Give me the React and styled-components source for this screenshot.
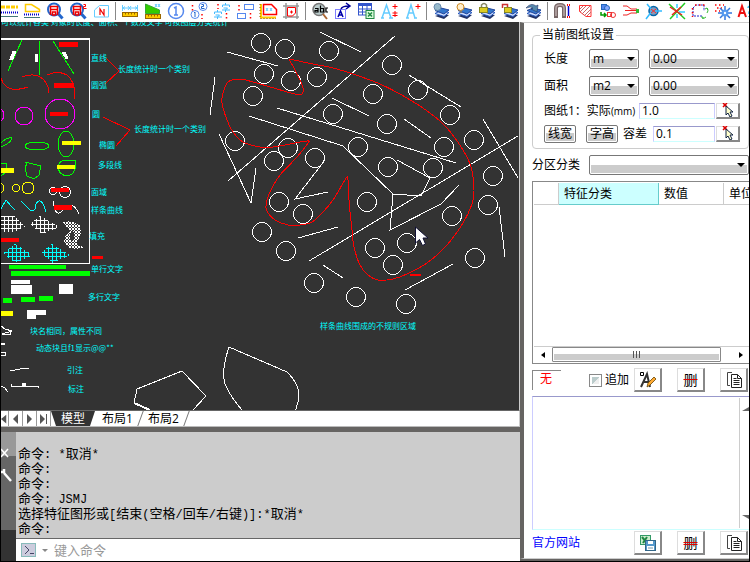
import React from "react"
import styled, { createGlobalStyle } from "styled-components"

const GlobalStyle = createGlobalStyle`
  * {
    box-sizing: border-box;
  }
  body {
    margin: 0;
    background: #000;
    color: #000;
    font-family: "Open Sans", "Noto Sans CJK SC", sans-serif;
    font-size: 12px;
    line-height: 16px;
  }
  button, input, select, textarea {
    font: inherit;
    color: inherit;
    margin: 0;
    padding: 0;
    border-radius: 0;
  }
`

const Window = styled.div`
  display: flex;
  flex-direction: column;
  height: 100vh;
  min-height: 540px;
  border: 1px solid #000;
  background: #666462;
`

/* toolbar */

const Toolbar = styled.header`
  flex: none;
  height: 21px;
  background: #fff;
  overflow: hidden;
`

const ToolRow = styled.div`
  display: flex;
  margin-left: -4px;
`

const ToolButton = styled.button`
  flex: none;
  display: flex;
  justify-content: center;
  width: 23px;
  height: 21px;
  border: 0;
  background: none;
`

const ToolSeparator = styled.span`
  flex: none;
  width: 6px;
  height: 18px;
  margin-top: 1px;
  border-left: 3px solid #fff;
  background: linear-gradient(90deg, #888 1px, #fff 1px);
`

/* main split */

const Body = styled.div`
  display: flex;
  flex: 1;
  min-height: 0;
`

const Workspace = styled.main`
  display: flex;
  flex-direction: column;
  flex: 1;
  min-width: 0;
`

const Drawing = styled.svg`
  display: block;
  flex: 1;
  width: 100%;
  min-height: 0;
  background: #333;
  border-right: 1px solid #ccc;
  shape-rendering: crispEdges;
  fill: none;
  stroke: #fff;
  font-family: "Noto Sans CJK SC", sans-serif;
  font-size: 8px;

  text {
    fill: #0ff;
    stroke: none;
  }
`

const TabBar = styled.nav`
  display: flex;
  flex: none;
  height: 17px;
  background: #fff;
  border-top: 1px solid #666;
  border-bottom: 1px solid #bbb;
  border-right: 1px solid #ccc;
  overflow: hidden;
`

const PageButton = styled.button`
  display: flex;
  align-items: center;
  justify-content: center;
  width: ${({ $first }) => ($first ? "8px" : "14px")};
  border: 0;
  border-right: 1px solid #999;
  background: #fff;
`

const Tab = styled.button`
  width: ${({ $active }) => ($active ? "44px" : "45px")};
  border: 0;
  line-height: 15px;
  white-space: nowrap;
  background: ${({ $active }) => ($active ? "#333" : "#fff")};
  color: ${({ $active }) => ($active ? "#fff" : "#000")};
  clip-path: ${({ $active }) =>
    $active ? "polygon(0 0, 100% 0, calc(100% - 5px) 100%, 5px 100%)" : "none"};
`

const Slash = styled.span`
  width: 1px;
  background: #777;
  transform: skewX(-20deg);
`

/* command line */

const Command = styled.section`
  display: flex;
  flex: none;
  height: 134px;
  border-top: 5px solid #666462;
`

const CommandSide = styled.div`
  display: flex;
  flex-direction: column;
  width: 15px;
  background: linear-gradient(#999 24px, #666 24px, #666 98px, #333 98px);
`

const SideButton = styled.button`
  display: flex;
  height: 16px;
  margin-top: ${({ $gap }) => $gap}px;
  border: 0;
  background: none;
`

const CommandMain = styled.div`
  display: flex;
  flex-direction: column;
  flex: 1;
  min-width: 0;
`

const Log = styled.div`
  display: flex;
  flex-direction: column;
  justify-content: flex-end;
  flex: 1;
  padding: 0 2px 3px;
  background: #ccc;
  font-size: 13px;
  line-height: 15px;
`

const LogLine = styled.div`
  height: 15px;
  white-space: pre;
  font-family: "Noto Sans CJK SC", sans-serif;
`

const Mono = styled.span`
  font-family: "Liberation Mono", monospace;
  font-size: 12px;
`

const Prompt = styled.div`
  display: flex;
  align-items: center;
  height: 23px;
  padding-left: 5px;
  gap: 4px;
  background: #fff;
  border-top: 1px solid #666;
`

const PromptButton = styled.button`
  display: flex;
  width: ${({ $wide }) => ($wide ? "15px" : "10px")};
  height: 14px;
  align-items: center;
  justify-content: center;
  background: ${({ $wide }) => ($wide ? "#ccd" : "none")};
  border: ${({ $wide }) => ($wide ? "1px solid #8bb" : "0")};
`

const PromptInput = styled.input`
  flex: 1;
  min-width: 0;
  border: 0;
  outline: 0;
  background: none;
  font-size: 13px;

  &::placeholder {
    color: #999;
    opacity: 1;
  }
`

/* dock */

const Dock = styled.aside`
  display: flex;
  flex-direction: column;
  flex: none;
  width: 229px;
  margin-bottom: 2px;
  padding: 4px 0 2px 8px;
  background: #fff;
  border: 1px solid #ccc;
  border-left: 4px solid #666462;
  border-right: 0;
`

const Group = styled.fieldset`
  display: flex;
  flex-direction: column;
  min-width: 0;
  margin: 0;
  padding: 2px 8px 3px 11px;
  border: 1px solid #ccc;
  border-radius: 4px;

  legend {
    padding: 0 2px;
    margin-left: -4px;
    line-height: 16px;
  }
`

const FieldRow = styled.div`
  display: flex;
  align-items: center;
  height: ${({ $small }) => ($small ? "23px" : "27px")};
  white-space: nowrap;
`

const Label = styled.label`
  width: ${({ $width }) => $width}px;
  flex: none;
`

const Unit = styled.span`
  font-size: 10px;
`

const SelectBox = styled.div`
  display: grid;
  width: ${({ $width }) => ($width ? `${$width}px` : "auto")};
  flex: ${({ $width }) => ($width ? "none" : "1")};
  margin-right: ${({ $gap }) => $gap || 0}px;
  align-items: center;

  select, svg {
    grid-area: 1 / 1;
  }
  svg {
    justify-self: end;
    margin-right: 4px;
    pointer-events: none;
  }
`

const Select = styled.select`
  appearance: none;
  width: 100%;
  height: 20px;
  padding-left: 3px;
  border: 1px solid #777;
  border-radius: 2px;
  background: linear-gradient(#fff 50%, #ccc 50%);
  box-shadow: inset 0 0 0 1px #fff;
  line-height: 16px;
`

const TextInput = styled.input`
  flex: 1;
  min-width: 0;
  height: 16px;
  padding-left: 2px;
  border: 1px solid #ccf;
  border-top-color: #99c;
  border-bottom-color: #cff;
  background: #fff;
`

const SmallButton = styled.button`
  width: 32px;
  height: 18px;
  margin-right: ${({ $gap }) => $gap}px;
  border: 1px solid #777;
  border-radius: 2px;
  background: linear-gradient(#fff 45%, #ccc 45%);
  box-shadow: inset 0 0 0 1px #fff;
  line-height: 15px;
`

const RaisedButton = styled.button`
  display: flex;
  flex: none;
  align-items: center;
  justify-content: center;
  width: ${({ $small }) => ($small ? "24px" : "28px")};
  height: ${({ $small }) => ($small ? "16px" : "24px")};
  margin-left: ${({ $gap }) => $gap}px;
  border: 1px solid #ddd;
  border-right: 2px solid #888;
  border-bottom: 2px solid #888;
  background: #fff;
`

const Struck = styled.span`
  font-size: 14px;
  text-decoration: line-through ${({ $double }) => ($double ? "double" : "solid")} #d00;
`

const CategoryRow = styled.div`
  display: flex;
  align-items: center;
  height: 32px;
`

const TablePanel = styled.div`
  display: flex;
  flex-direction: column;
  flex: 1;
  min-height: 60px;
  padding: 1px 0 1px 1px;
  border: 1px solid #888;
  border-right: 0;
  overflow: hidden;
`

const Table = styled.table`
  table-layout: fixed;
  width: 100%;
  border-collapse: separate;
  border-spacing: 0;
`

const Head = styled.th`
  width: ${({ $width }) => ($width ? `${$width}px` : "auto")};
  height: 22px;
  padding: 0 0 0 5px;
  text-align: left;
  font-weight: 400;
  white-space: nowrap;
  overflow: hidden;
  border-right: 1px solid ${({ $active }) => ($active ? "#6cc" : "#ccc")};
  border-bottom: 1px solid ${({ $active }) => ($active ? "#6cc" : "#ccc")};
  background: ${({ $active }) => ($active ? "#cff" : "#fff")};

  &:last-child {
    border-right: 0;
  }
`

const ScrollBar = styled.div`
  display: flex;
  align-items: center;
  height: 16px;
  margin-top: auto;
  border-top: 1px solid #ccc;
`

const ScrollArrow = styled.button`
  display: flex;
  align-items: center;
  justify-content: center;
  flex: ${({ $grow }) => ($grow ? "1" : "none")};
  width: 18px;
  height: 14px;
  border: 0;
  padding-left: ${({ $grow }) => ($grow ? "12px" : "0")};
  background: none;
`

const Thumb = styled.div`
  display: flex;
  align-items: center;
  justify-content: center;
  width: 169px;
  height: 15px;
  border: 1px solid #888;
  border-radius: 1px;
  background: linear-gradient(#fff 45%, #ccc 45%);
  box-shadow: inset 0 0 0 1px #fff;
`

const ActionRow = styled.div`
  display: flex;
  align-items: center;
  height: ${({ $last }) => ($last ? "26px" : "32px")};
`

const Status = styled.span`
  width: 29px;
  height: 20px;
  margin-right: 28px;
  padding-left: 7px;
  border-top: 1px solid #888;
  border-left: 1px solid #888;
  color: #f00;
`

const CheckLabel = styled.label`
  display: flex;
  align-items: center;
  gap: 3px;
  width: 45px;
  white-space: nowrap;
`

const Check = styled.input`
  appearance: none;
  width: 13px;
  height: 13px;
  border: 1px solid #888;
  background: linear-gradient(135deg, #bcc 50%, #eee 50%);
  box-shadow: inset 0 0 0 2px #fff;
`

const NoteBox = styled.div`
  display: flex;
  height: 134px;
  border-top: 1px solid #99c;
  border-left: 1px solid #ccf;
  border-bottom: 1px solid #cff;
`

const Notes = styled.textarea`
  flex: 1;
  min-width: 0;
  border: 0;
  outline: 0;
  resize: none;
  background: none;
`

const NoteScroll = styled.div`
  display: flex;
  flex-direction: column;
  justify-content: space-between;
  align-items: flex-end;
  width: 10px;
  margin: 1px 0;
  padding: 7px 0;
  border-left: 1px solid #ccc;
`

const SiteLink = styled.a`
  width: 102px;
  color: #00f;
  text-decoration: none;
`

/* toolbar icons, 20 x 20 */

const Ruler = ({ y }) => (
  <g>
    <rect x="2.5" y={y} width="15" height="4" fill="#fc0" stroke="#960" />
    <path d={`M5.5 ${y}v2M8.5 ${y}v2M11.5 ${y}v2M14.5 ${y}v2`} stroke="#960" />
  </g>
)

const Lens = () => (
  <g>
    <circle cx="9" cy="8.5" r="6" fill="#fff" stroke="#26c" strokeWidth="2" />
    <path d="M13.5 13l4 4.5" stroke="#26c" strokeWidth="3" />
    <path d="M5.5 14V5.5h7V14M5.5 8.5h7M7.5 11h3v3h-3z" stroke="#e00" strokeWidth="1.5" />
  </g>
)

const Layers = () => (
  <g>
    <path d="M4 15l6-2 8 1-5 4z" fill="#236" />
    <path d="M4 12.5l6-3 8 2-5 4z" fill="#cdf" stroke="#25b" />
    <path d="M4 9.5l6-2.500 8 2-5 4z" fill="#37c" stroke="#249" />
  </g>
)

const RedDots = ({ d }) => <path d={d} stroke="#f00" strokeWidth="1.5" strokeDasharray="1.5 2.5" />

const tools = [
  {
    name: "线段",
    icon: (
      <>
        <path d="M2 6h17" stroke="#fc0" strokeWidth="3" strokeDasharray="4 1" />
        <path d="M2 11.5h17" stroke="#00c" strokeWidth="2" strokeDasharray="1 1" />
        <path d="M2 15.5h17" stroke="#477" />
      </>
    ),
  },
  {
    name: "面积线",
    icon: (
      <>
        <path d="M3.5 3.5h6l8 5v2h-14z" stroke="#fc0" strokeWidth="1.5" />
        <path d="M2 13.5h16" stroke="#00c" strokeWidth="2" strokeDasharray="1 1" />
        <path d="M2 16.5h16" stroke="#477" />
      </>
    ),
  },
  { name: "查找图块", icon: <Lens /> },
  {
    name: "查找图块2",
    icon: (
      <>
        <Lens />
        <path d="M15.500 3.500h2v2h-2v2h3" stroke="#f00" />
      </>
    ),
  },
  {
    name: "编号",
    icon: (
      <>
        <path d="M3.500 16V9l5-4.5h9V16z" stroke="#6cf" />
        <path d="M9 14V8l4 6V8" stroke="#e00" strokeWidth="1.2" />
      </>
    ),
  },
  null,
  {
    name: "量长度",
    icon: (
      <>
        <path d="M2.5 4v6M17.5 4v6M3 7h14M5 5.5L3 7l2 1.5M15 5.5L17 7l-2 1.5M8 5l3 4M11 5L8 9" stroke="#6cf" />
        <Ruler y={11.5} />
      </>
    ),
  },
  {
    name: "量面积",
    icon: (
      <>
        <path d="M2.5 3v9.5h14V9z" fill="#3c0" stroke="#3a3" />
        <path d="M12 3l2 3M14 3l-2 3M15 3l2 3M17 3l-2 3" stroke="#6cf" />
        <Ruler y={13.5} />
      </>
    ),
  },
  {
    name: "序号",
    icon: (
      <>
        <circle cx="10" cy="10" r="7.5" stroke="#58e" strokeWidth="1.5" />
        <path d="M8 7l2-1v8M8 14h4" stroke="#58e" strokeWidth="1.5" />
      </>
    ),
  },
  {
    name: "序号连接",
    icon: (
      <>
        <circle cx="14" cy="5.5" r="4" stroke="#58e" />
        <circle cx="6" cy="13.5" r="4" stroke="#58e" />
        <path d="M12.5 3.5h2v2h-2v2h3M5 12l1-1v5" stroke="#26c" />
        <RedDots d="M3.5 4v6M13 13v5" />
      </>
    ),
  },
  {
    name: "文字连接",
    icon: (
      <>
        <path d="M13.500 2v2M10.500 6V4h7v2M11.500 7h4l-2 2v2M10 9h8" stroke="#4bf" />
        <path d="M5.500 9v2M2.500 13v-2h7v2M3.500 14h4l-2 2v2M2 16h8" stroke="#4bf" />
        <RedDots d="M6 3v5M14.5 12v6" />
      </>
    ),
  },
  {
    name: "图框连接",
    icon: (
      <>
        <rect x="9.5" y="3.5" width="9" height="5" stroke="#58e" />
        <rect x="2.5" y="12.5" width="8" height="5" stroke="#58e" />
        <RedDots d="M4 4v6M15.5 12v6" />
      </>
    ),
  },
  {
    name: "区域面积",
    icon: (
      <>
        <path d="M5.5 3.5h8l5 5v5h-13z" stroke="#f00" strokeWidth="1.5" />
        <path d="M3 3v13.5h15" stroke="#fc0" strokeWidth="2" />
        <path d="M2 3v14.5h16" stroke="#840" strokeDasharray="1 2" />
        <path d="M8 7l2 3M10 7l-2 3M12 7l2 3M14 7l-2 3" stroke="#6cf" />
      </>
    ),
  },
  {
    name: "裁剪",
    icon: (
      <>
        <path d="M2 5h16M2 16h16M5 2v16M16 2v16" stroke="#999" strokeWidth="1.5" />
        <path d="M6.5 6.5h8V12l-3 3h-5z" fill="#fff" stroke="#f00" />
        <path d="M10.5 9.5v3M9 11h3" stroke="#f00" />
      </>
    ),
  },
  null,
  {
    name: "查找文字",
    icon: (
      <>
        <circle cx="9" cy="8.5" r="6" fill="#bcc" stroke="#777" strokeWidth="1.5" />
        <path d="M5 7.500h3V11H5V9.500h3M10.500 4.500V11h3V7.500h-3M18 7h-2v4h2" stroke="#000" strokeWidth="1.2" />
        <path d="M13 13l4 5" stroke="#a63" strokeWidth="2" />
      </>
    ),
  },
  {
    name: "文字定位",
    icon: (
      <>
        <rect x="2.5" y="8.5" width="10" height="9" stroke="#00f" strokeDasharray="1 1" />
        <path d="M5 16l2.5-6 2.5 6M6 14h3" stroke="#00a" strokeWidth="1.5" />
        <path d="M8 8q1-3 8-3M13 2l4 3-4 3" stroke="#009" strokeWidth="1.5" />
      </>
    ),
  },
  {
    name: "导出表格",
    icon: (
      <>
        <rect x="2.5" y="3" width="13" height="11" fill="#fff" stroke="#35c" />
        <path d="M2 3.5h14" stroke="#35c" strokeWidth="3" />
        <path d="M3 8h12M3 11h12M6.5 4v10M11 4v10" stroke="#35c" />
        <rect x="10" y="9.5" width="8" height="8" fill="#dfd" stroke="#284" />
        <path d="M12 11.5l4 4M16 11.5l-4 4" stroke="#284" strokeWidth="1.5" />
      </>
    ),
  },
  {
    name: "字体增减",
    icon: (
      <>
        <path d="M3 17L7.5 4 12 17M4 12h7M2 17h3M10 17h4" stroke="#6cf" strokeWidth="1.5" />
        <path d="M16 3v5M13.5 5.5h5M16 10v6M13.5 12h5M13.5 14.5h5" stroke="#f00" />
      </>
    ),
  },
  {
    name: "字体增大",
    icon: (
      <>
        <path d="M5 17L9 4l4 13M6 12h6M4 17h3M12 17h3" stroke="#6cf" strokeWidth="1.5" />
        <path d="M16 3v5M13.5 5.5h5" stroke="#f00" />
      </>
    ),
  },
  null,
  {
    name: "关闭图层",
    icon: (
      <>
        <Layers />
        <circle cx="6.5" cy="6" r="3.5" fill="#9bc" stroke="#68a" />
      </>
    ),
  },
  {
    name: "打开图层",
    icon: (
      <>
        <Layers />
        <circle cx="6.5" cy="6" r="3.5" fill="#fec" stroke="#c82" />
        <path d="M6 10h2v2H6z" fill="#777" />
      </>
    ),
  },
  {
    name: "锁定图层",
    icon: (
      <>
        <Layers />
        <path d="M4.5 7V4q2.5-3 5 0v3" stroke="#886" strokeWidth="1.5" />
        <rect x="2.5" y="6.5" width="8" height="5" fill="#dc2" stroke="#882" />
      </>
    ),
  },
  {
    name: "解锁图层",
    icon: (
      <>
        <Layers />
        <path d="M2.5 7V3.5h5V6" stroke="#c33" strokeWidth="1.5" />
        <rect x="4.5" y="6.5" width="7" height="5" fill="#dc2" stroke="#882" />
      </>
    ),
  },
  {
    name: "图层转换",
    icon: (
      <>
        <Layers />
        <path d="M3 7q5-6 10-2l2-1-1 7-6-3 2-1Q8 5 3 7z" fill="#58a" stroke="#236" strokeWidth=".6" />
      </>
    ),
  },
  null,
  {
    name: "吸附",
    icon: (
      <>
        <path d="M4 17V7q0-3 4-3t4 3v10" stroke="#766" strokeWidth="4" />
        <path d="M4 15V7q0-3 4-3t4 3v8" stroke="#baa" strokeWidth="1.5" />
        <path d="M16.5 5v10" stroke="#00c" strokeWidth="1.5" />
        <path d="M15 4h3M15 16h3" stroke="#f00" strokeWidth="2" strokeDasharray="1 1" />
      </>
    ),
  },
  {
    name: "填充",
    icon: (
      <>
        <path d="M4.5 4.5h11.5v11h-5l-6.5-5z" stroke="#f33" />
        <path d="M5 8l3-3M5 11l6-6M7 13l8-8M9 15l7-7M12 15l4-4" stroke="#c66" />
      </>
    ),
  },
  {
    name: "图形转换",
    icon: (
      <>
        <rect x="3.5" y="3.5" width="5" height="5" fill="#58e" stroke="#26b" />
        <circle cx="9" cy="7" r="2.5" fill="#8af" stroke="#26b" />
        <path d="M3 11v3h5M6 12l2 2-2 2" stroke="#090" strokeWidth="1.5" />
        <rect x="9.5" y="11.5" width="4" height="4" stroke="#e33" />
        <circle cx="15" cy="14" r="2.5" stroke="#e33" />
      </>
    ),
  },
  {
    name: "合并线",
    icon: (
      <>
        <path d="M2 5h4l4 3h6M2 14h4l4-2h6M4 9.5h12" stroke="#e22" />
        <rect x="15" y="8" width="3" height="4" fill="#3b3" />
      </>
    ),
  },
  {
    name: "相交",
    icon: (
      <>
        <circle cx="9.5" cy="10" r="4.5" fill="#89b" stroke="#06a" strokeWidth="1.5" />
        <path d="M3 3l5 6M8 10l-6 8M11 10h7" stroke="#3bf" strokeWidth="1.5" />
        <path d="M7 8l5 4M12 8l-5 4" stroke="#e33" />
      </>
    ),
  },
  {
    name: "打断",
    icon: (
      <>
        <path d="M2 3l16 15M18 2L3 18" stroke="#2c2" strokeWidth="1.5" />
        <path d="M10 3v4M10 13v4M12 11h6" stroke="#3cf" strokeWidth="1.5" />
        <path d="M3 6l12 8M14 6l-9 8" stroke="#e22" strokeWidth="1.5" />
      </>
    ),
  },
  {
    name: "旋转",
    icon: (
      <>
        <path d="M3 7l3-3h8v6M3 7v8h9" stroke="#22c" strokeDasharray="2 1" />
        <RedDots d="M2.5 7v9M5 4h10" />
        <path d="M17 7q2 3 0 5M12 17q2 1 4-1M15 8l2-1 1 2M12 15v2h2" stroke="#3b3" />
      </>
    ),
  },
  {
    name: "炸开",
    icon: (
      <>
        <RedDots d="M2 4h9M4 7h5M2 10h5" />
        <path d="M12 5v14M5 12h14M7 7l10 10M17 7L7 17" stroke="#37d" strokeWidth="1.5" />
        <circle cx="12" cy="12" r="3.5" fill="#59e" />
        <circle cx="12" cy="12" r="1.2" fill="#fff" />
      </>
    ),
  },
  {
    name: "文字查询",
    icon: (
      <>
        <path d="M2.5 16L6 5l4 11M4 12h5" stroke="#e11" strokeWidth="2" />
        <path d="M12 7q0-2 3-2v4l-2 2v2M13 15v1" stroke="#3be" strokeWidth="1.5" />
      </>
    ),
  },
]

/* drawing data */

const circles = [
  [261, 43], [285, 49], [329, 51], [264, 74], [291, 81], [317, 77], [253, 96],
  [392, 65], [418, 90], [373, 94], [333, 114], [387, 124], [450, 115],
  [235, 141], [288, 148], [274, 161], [315, 158], [358, 147], [388, 167],
  [433, 168], [444, 147], [474, 140], [493, 176], [488, 205], [279, 202],
  [303, 214], [367, 202], [452, 216], [262, 232], [286, 251], [314, 283],
  [356, 297], [406, 304], [375, 248], [393, 265], [407, 243], [475, 258],
]

const whiteLines = [
  "227,52 278,66",
  "320,32 361,52",
  "395,36 228,181",
  "215,77 210,115",
  "277,108 456,163",
  "249,116 343,146 393,194 421,196 430,178 397,160",
  "332,98 369,116",
  "404,119 431,138",
  "409,75 461,107",
  "483,119 518,178",
  "518,136 309,261",
  "219,134 251,203 256,168",
  "325,160 295,199 328,192",
  "393,194 390,230 441,204 459,185",
  "298,238 338,227",
  "323,265 343,278",
  "405,290 453,264",
  "499,207 505,257",
  "193,410 206,396 182,371 137,389 134,403",
  "10,371 20,369 29,368",
  "11,384 11,386 38,386 38,388",
  "1,386 5,388 8,392",
  "1,326 5,329 12,331 2,334 10,334 10,331",
  "1,352 5,352 5,355 1,355",
]

const spline = [
  [289, 59], [295, 70], [300, 80], [303, 88], [302, 94], [295, 94], [277, 89],
  [253, 82], [240, 79], [228, 82], [223, 93], [222, 103], [227, 120],
  [233, 132], [243, 142], [260, 147], [273, 147], [290, 144], [307, 141],
  [308, 143], [297, 157], [280, 175], [272, 188], [267, 200], [266, 208],
  [268, 213], [275, 220], [288, 225], [300, 225], [312, 222], [323, 212],
  [333, 200], [342, 185], [347, 177], [348, 180], [349, 200], [350, 212],
  [352, 230], [354, 247], [360, 265], [368, 275], [378, 280], [393, 279],
  [407, 274], [427, 263], [447, 245], [463, 223], [472, 204], [474, 190],
  [471, 167], [463, 150], [447, 128], [430, 113], [407, 98], [380, 84],
  [353, 74], [333, 68], [313, 64], [289, 59],
]

const labels = [
  [1, 25, "可以统计各类 对象的长度、面积、个数及文字  可按图层分类统计"],
  [91, 61, "直线"],
  [91, 88, "圆弧"],
  [118, 72, "长度统计时一个类别"],
  [92, 117, "圆"],
  [134, 132, "长度统计时一个类别"],
  [99, 148, "椭圆"],
  [98, 168, "多段线"],
  [91, 195, "面域"],
  [91, 213, "样条曲线"],
  [89, 239, "填充"],
  [91, 272, "单行文字"],
  [88, 300, "多行文字"],
  [30, 334, "块名相同，属性不同"],
  [36, 351, "动态块且f1显示@@**"],
  [67, 373, "引注"],
  [68, 392, "标注"],
  [320, 329, "样条曲线围成的不规则区域"],
]

const bars = [
  ["#f00", 59, 42, 19, 5], ["#f00", 54, 83, 20, 5], ["#f00", 50, 112, 18, 4],
  ["#ff0", 62, 141, 19, 4], ["#ff0", 57, 165, 18, 4], ["#ff0", 1, 168, 13, 5],
  ["#f00", 51, 188, 18, 4], ["#f00", 54, 205, 18, 5], ["#f00", 1, 238, 18, 4],
  ["#f00", 92, 256, 11, 3], ["#0f0", 9, 265, 57, 4], ["#0f0", 11, 271, 79, 5],
  ["#fff", 11, 280, 19, 4], ["#fff", 11, 285, 21, 9], ["#fff", 59, 284, 14, 10],
  ["#0f0", 3, 298, 9, 5], ["#0f0", 21, 297, 14, 5], ["#0f0", 39, 296, 14, 5],
  ["#ff0", 1, 311, 12, 5], ["#fff", 27, 310, 19, 5], ["#fff", 27, 310, 9, 9],
  ["#fff", 35, 54, 3, 8], ["#fff", 1, 343, 4, 2], ["#fff", 22, 383, 4, 3],
  ["#f00", 410, 274, 11, 2],
]

// Catmull-Rom through all points
const smooth = (pts) =>
  pts.slice(1).reduce((d, p, i) => {
    const a = pts[i]
    const before = pts[i - 1] || a
    const after = pts[i + 2] || p
    const c1 = [a[0] + (p[0] - before[0]) / 6, a[1] + (p[1] - before[1]) / 6]
    const c2 = [p[0] - (after[0] - a[0]) / 6, p[1] - (after[1] - a[1]) / 6]
    return `${d}C${c1} ${c2} ${p}`
  }, `M${pts[0]}`)

const Hatch = ({ id, color, size }) => (
  <pattern id={id} width={size} height={size} patternUnits="userSpaceOnUse">
    <path d={`M0 .5H${size}M.5 0V${size}`} stroke={color} />
  </pattern>
)

const Scene = () => (
  <Drawing role="img" aria-label="图纸">
    <defs>
      <Hatch id="hatchWhite" color="#fff" size={4} />
      <Hatch id="hatchCyan" color="#0ff" size={4} />
      <pattern id="dots" width="3" height="3" patternUnits="userSpaceOnUse">
        <path d="M0 0h2v2H0zM2 2h1v1H2z" fill="#fff" stroke="none" />
      </pattern>
    </defs>
    <g transform="translate(-1 -22)">
      <path d="M1 39h88.5V263.5H1" />
      <path d="M1 38.5h89" />

      <path d="M22 40L8 71M39.5 41v34M53 41l21 33" stroke="#0f0" />
      <path d="M13 51h3l-3 8h-3zM62 52h3l3 6-2 1z" fill="#fff" />
      <path
        d="M1 78Q4 89 15 89.5 23 89 28 87M22 77Q35 72 43 79 49 85 49 93M47 75Q58 70 67 75 77 84 74 99"
        stroke="#f00"
      />
      <g stroke="#f0f">
        <circle cx="24" cy="116" r="9" />
        <circle cx="60" cy="114" r="15" />
        <circle cx="-3" cy="115" r="7" />
      </g>
      <g stroke="#0f0">
        <ellipse cx="37" cy="146" rx="12" ry="4" />
        <ellipse cx="66" cy="144" rx="8" ry="13" />
        <path d="M1 143Q7 137 12 138 11 143 1 147M1 163h5v5M5 173l-4 3" />
        <path d="M25 162l16 4-2 9-5 4-7-3-2-8 2-5M58 166Q60 160 66 160H75V169Q73 176 66 176 58 174 58 166" />
      </g>
      <g stroke="#ff0">
        <circle cx="16" cy="188" r="3.5" />
        <circle cx="28" cy="188" r="6" />
        <circle cx="-1" cy="188" r="5" />
      </g>
      <circle cx="53" cy="191" r="3.5" />
      <circle cx="65" cy="192" r="5.5" />
      <path d="M1 209l5-9 5 6 4 4M21 201l6 6q8 9 9-3 5-9 10 8" stroke="#0ff" />
      <path d="M53 201q3 20 11 7 9-8 15 6" />

      <path d="M1 216h13l11 11-12 5H1zM30 224l10-8 20 11-18 7z" fill="url(#hatchWhite)" stroke="none" />
      <path d="M3 253l12-9 18 11-18 8zM41 253l11-9 18 11-17 8z" fill="url(#hatchCyan)" stroke="none" />
      <path
        d="M63 222l7-1 10 4 1 10-4 6 1 5 7 1-7 2-9-1-5-5 1-6 5-6zM71 231l3 1v8l-3 2-1-4z"
        fill="url(#dots)"
        fillRule="evenodd"
        stroke="none"
      />

      {bars.map(([color, x, y, w, h]) => (
        <rect key={`${x}-${y}-${w}`} x={x} y={y} width={w} height={h} fill={color} stroke="none" />
      ))}

      <path d="M106 58l13 13-14 13M103 117l27 13-14 16" stroke="#f00" />
      {labels.map(([x, y, text]) => (
        <text key={`${x}-${y}`} x={x} y={y}>{text}</text>
      ))}

      {whiteLines.map((points) => (
        <polyline key={points} points={points} />
      ))}
      <path d="M134 403l16 7" strokeWidth="2" />
      <path d="M229 347L287 372Q302 386 298 402L295 412M229 347Q221 371 225 384 231 398 243 411" />
      {circles.map(([cx, cy]) => (
        <circle key={`${cx}-${cy}`} cx={cx} cy={cy} r="9.5" />
      ))}
      <path d={smooth(spline)} stroke="#f00" />
      <path
        d="M415.5 227v16l4-3.5 3 6 3-1.5-2.5-6h5z"
        fill="#fff"
        stroke="#113"
        shapeRendering="auto"
      />
    </g>
  </Drawing>
)

const Icon = ({ children, width = 20, height = 20 }) => (
  <svg width={width} height={height} viewBox={`0 0 ${width} ${height}`} fill="none" aria-hidden="true">
    {children}
  </svg>
)

const Triangle = ({ d, color = "#000", width = 8, height = 8 }) => (
  <Icon width={width} height={height}>
    <path d={d} fill={color} />
  </Icon>
)

const DropDown = ({ id, width, gap, label, options }) => (
  <SelectBox $width={width} $gap={gap}>
    <Select id={id} aria-label={label}>
      {options.map((option) => (
        <option key={option}>{option}</option>
      ))}
    </Select>
    <Triangle d="M0 2h8L4 6z" />
  </SelectBox>
)

const PickButton = ({ label }) => (
  <RaisedButton $small $gap={1} aria-label={label}>
    <Icon width={14} height={14}>
      <path d="M2 0l4 4M6 0L2 4" stroke="#d00" strokeWidth="1.5" />
      <path d="M5 3v9l2-2 2 4 2-1-2-4h3z" fill="#ffc" stroke="#124" />
    </Icon>
  </RaisedButton>
)

const CopyIcon = () => (
  <Icon width={18} height={18}>
    <path d="M7 1.5H2.5v13H5" stroke="#444" />
    <path d="M6.5 3.5h6l4 4v9h-10z" fill="#fff" stroke="#222" />
    <path d="M12.5 3.5v4h4M8.5 7.5h3M8.5 9.5h6M8.5 11.5h6M8.5 13.5h6" stroke="#222" />
  </Icon>
)

const LogText = ({ text }) => (
  <LogLine>
    {text.split(/([\x20-\x7e]+)/).map((part, i) => (i % 2 ? <Mono key={i}>{part}</Mono> : part))}
  </LogLine>
)

const history = [
  "命令: *取消*",
  "命令:",
  "命令:",
  "命令: JSMJ",
  "选择特征图形或[结束(空格/回车/右键)]:*取消*",
  "命令:",
]

const pagers = [
  ["第一页", "M6 0v10L0 5z"],
  ["上一页", "M6 0v10L1 5z"],
  ["下一页", "M1 0v10l5-5z"],
  ["最后一页", "M0 0v10l5-5zM6 0h1v10H6z"],
]

const SettingsDock = () => (
  <Dock>
    <Group>
      <legend>当前图纸设置</legend>
      <FieldRow>
        <Label $width={45} htmlFor="length">长度</Label>
        <DropDown id="length" width={50} gap={10} options={["m", "mm"]} />
        <DropDown width={90} label="长度精度" options={["0.00", "0.0"]} />
      </FieldRow>
      <FieldRow>
        <Label $width={45} htmlFor="area">面积</Label>
        <DropDown id="area" width={50} gap={10} options={["m2", "mm2"]} />
        <DropDown width={90} label="面积精度" options={["0.00", "0.0"]} />
      </FieldRow>
      <FieldRow $small>
        <Label $width={95} htmlFor="scale">图纸1：实际<Unit>(mm)</Unit></Label>
        <TextInput id="scale" defaultValue="1.0" />
        <PickButton label="拾取比例" />
      </FieldRow>
      <FieldRow $small>
        <SmallButton $gap={10}>线宽</SmallButton>
        <SmallButton $gap={5}>字高</SmallButton>
        <Label $width={30} htmlFor="tolerance">容差</Label>
        <TextInput id="tolerance" defaultValue="0.1" />
        <PickButton label="拾取容差" />
      </FieldRow>
    </Group>

    <CategoryRow>
      <Label $width={57} htmlFor="category">分区分类</Label>
      <DropDown id="category" options={[""]} />
    </CategoryRow>

    <TablePanel>
      <Table>
        <thead>
          <tr>
            <Head $width={25} />
            <Head $width={100} $active>特征分类</Head>
            <Head $width={65}>数值</Head>
            <Head>单位</Head>
          </tr>
        </thead>
      </Table>
      <ScrollBar>
        <ScrollArrow aria-label="向左"><Triangle d="M6 1v6L2 4z" /></ScrollArrow>
        <Thumb>
          <Icon width={8} height={7}>
            <path d="M.5 0v7M3.5 0v7M6.5 0v7" stroke="#555" />
          </Icon>
        </Thumb>
        <ScrollArrow $grow aria-label="向右"><Triangle d="M2 1v6l4-3z" /></ScrollArrow>
      </ScrollBar>
    </TablePanel>

    <ActionRow>
      <Status>无</Status>
      <CheckLabel>
        <Check type="checkbox" />
        追加
      </CheckLabel>
      <RaisedButton aria-label="标注样式">
        <Icon width={18} height={18}>
          <path d="M1.5 1.5h3v3h-3z" stroke="#000" />
          <path d="M2 16L8 3l3 13M4 11h6" stroke="#333" strokeWidth="2" />
          <path d="M8 16l1-4 6-6 2 2-6 6z" fill="#fa3" stroke="#640" strokeWidth=".8" />
        </Icon>
      </RaisedButton>
      <RaisedButton $gap={15}><Struck>删</Struck></RaisedButton>
      <RaisedButton $gap={15} aria-label="复制"><CopyIcon /></RaisedButton>
    </ActionRow>

    <NoteBox>
      <Notes aria-label="结果" />
      <NoteScroll>
        <Triangle d="M1 6h7V2z" color="#666" />
        <Triangle d="M1 2h7v4z" color="#666" />
      </NoteScroll>
    </NoteBox>

    <ActionRow $last>
      <SiteLink href="#site">官方网站</SiteLink>
      <RaisedButton aria-label="导出">
        <Icon width={18} height={18}>
          <rect x="1.5" y="1.5" width="10" height="9" fill="#cec" stroke="#396" />
          <path d="M3 3l5 6M8 3L4 9" stroke="#284" strokeWidth="2" />
          <rect x="6.5" y="6.5" width="10" height="10" fill="#59c" stroke="#368" />
          <path d="M9 7h5v3H9zM8 12h7v4H8z" fill="#fff" />
          <path d="M9 14h5" stroke="#79a" />
        </Icon>
      </RaisedButton>
      <RaisedButton $gap={15}><Struck $double>删</Struck></RaisedButton>
      <RaisedButton $gap={15} aria-label="全部复制"><CopyIcon /></RaisedButton>
    </ActionRow>
  </Dock>
)

const App = () => {
  return (
    <Window>
      <GlobalStyle />
      <Toolbar>
        <ToolRow>
          {tools.map((tool, i) =>
            tool ? (
              <ToolButton key={tool.name} title={tool.name}>
                <Icon>{tool.icon}</Icon>
              </ToolButton>
            ) : (
              <ToolSeparator key={i} />
            )
          )}
        </ToolRow>
      </Toolbar>

      <Body>
        <Workspace>
          <Scene />
          <TabBar>
            {pagers.map(([name, d], i) => (
              <PageButton key={name} $first={i === 0} aria-label={name}>
                <Triangle d={d} color="#555" height={10} />
              </PageButton>
            ))}
            <Tab $active>模型</Tab>
            <Tab>布局1</Tab>
            <Slash />
            <Tab>布局2</Tab>
            <Slash />
          </TabBar>
          <Command>
            <CommandSide>
              <SideButton $gap={13} aria-label="关闭">
                <Icon width={12} height={16}>
                  <path d="M0 4l7 8M7 4l-7 8" stroke="#fff" strokeWidth="1.5" />
                </Icon>
              </SideButton>
              <SideButton $gap={6} aria-label="自定义">
                <Icon width={12} height={16}>
                  <path d="M0 5h3V2M3 6l7 8" stroke="#fff" strokeWidth="2.5" />
                </Icon>
              </SideButton>
            </CommandSide>
            <CommandMain>
              <Log>
                {history.map((text, i) => (
                  <LogText key={i} text={text} />
                ))}
              </Log>
              <Prompt>
                <PromptButton $wide aria-label="命令">
                  <Icon width={12} height={10}>
                    <path d="M2 1l4 4-4 4M7 8.5h4" stroke="#446" />
                  </Icon>
                </PromptButton>
                <PromptButton aria-label="最近的命令">
                  <Triangle d="M1 3h6L4 6z" color="#888" />
                </PromptButton>
                <PromptInput aria-label="命令" placeholder="键入命令" />
              </Prompt>
            </CommandMain>
          </Command>
        </Workspace>
        <SettingsDock />
      </Body>
    </Window>
  )
}

export default App
